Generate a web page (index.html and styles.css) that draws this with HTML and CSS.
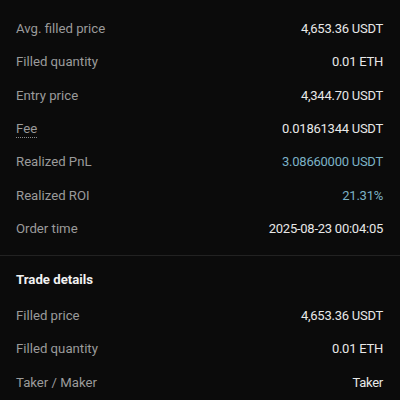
FILE: index.html
```html
<!DOCTYPE html>
<html>
<head>
<meta charset="utf-8">
<link rel="stylesheet" href="styles.css">
</head>
<body>
<div class="page">
  <div class="section">
    <div class="row"><span class="label">Avg. filled price</span><span class="value">4,653.36 USDT</span></div>
    <div class="row"><span class="label">Filled quantity</span><span class="value">0.01 ETH</span></div>
    <div class="row"><span class="label">Entry price</span><span class="value">4,344.70 USDT</span></div>
    <div class="row"><span class="label dotted">Fee</span><span class="value">0.01861344 USDT</span></div>
    <div class="row"><span class="label">Realized PnL</span><span class="value pos">3.08660000 USDT</span></div>
    <div class="row"><span class="label">Realized ROI</span><span class="value pos">21.31%</span></div>
    <div class="row"><span class="label">Order time</span><span class="value">2025-08-23 00:04:05</span></div>
  </div>
  <div class="divider"></div>
  <div class="section">
    <div class="heading">Trade details</div>
    <div class="row"><span class="label">Filled price</span><span class="value">4,653.36 USDT</span></div>
    <div class="row"><span class="label">Filled quantity</span><span class="value">0.01 ETH</span></div>
    <div class="row"><span class="label">Taker / Maker</span><span class="value">Taker</span></div>
  </div>
</div>
</body>
</html>
```
FILE: styles.css
```css
html, body {
  margin: 0;
  padding: 0;
  background: #0b0b0b;
  font-family: Roboto, "Liberation Sans", sans-serif;
}
.page {
  width: 400px;
  height: 400px;
  overflow: hidden;
  padding-top: 12px;
  box-sizing: border-box;
}
.section {
  padding: 0 17px 0 16px;
}
.row {
  height: 33.33px;
  display: flex;
  align-items: center;
  justify-content: space-between;
  font-size: 13px;
}
.label {
  color: #9b9b9b;
  font-size: 13.2px;
}
.dotted {
  border-bottom: 1px dotted #8a8a8a;
  line-height: 16px;
  padding-top: 2px;
}
.value {
  color: #e8e8e8;
  font-size: 13px;
  letter-spacing: -0.25px;
}
.value.pos {
  color: #7cb2c6;
}
.divider {
  height: 1px;
  background: #222222;
  margin-top: 9.33px;
}
.heading {
  color: #f2f2f2;
  font-weight: 700;
  font-size: 13.2px;
  line-height: 22px;
  padding: 13.5px 0 7.83px;
}
```
